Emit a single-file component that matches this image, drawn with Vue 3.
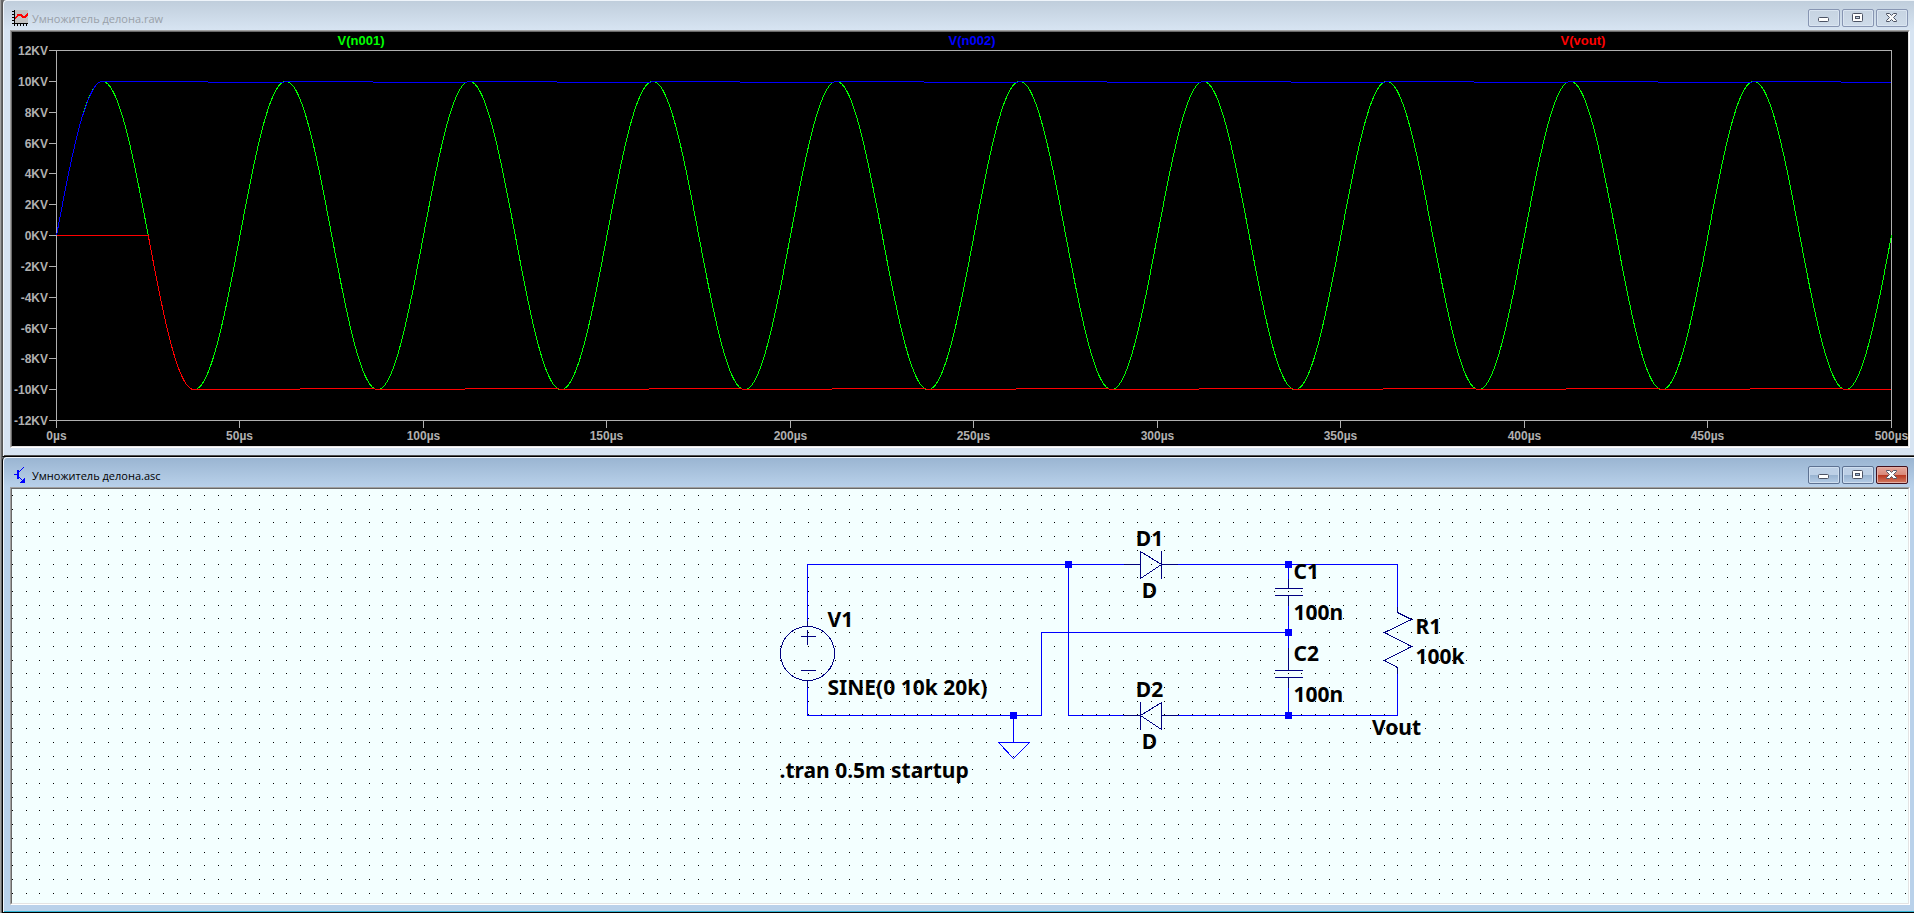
<script setup>
import { ref, computed, onMounted, onBeforeUnmount } from 'vue'

const plotPane = ref(null)
const sheetPane = ref(null)
const plotSize = ref({ w: 1896, h: 414 })
const sheetSize = ref({ w: 1896, h: 414 })
let observer

function measure() {
  if (plotPane.value) plotSize.value = { w: plotPane.value.clientWidth, h: plotPane.value.clientHeight }
  if (sheetPane.value) sheetSize.value = { w: sheetPane.value.clientWidth, h: sheetPane.value.clientHeight }
}

onMounted(() => {
  measure()
  observer = new ResizeObserver(measure)
  observer.observe(plotPane.value)
  observer.observe(sheetPane.value)
})
onBeforeUnmount(() => observer && observer.disconnect())

// Waveform plot area inside the pane
const area = computed(() => ({
  left: 44,
  top: 18,
  right: plotSize.value.w - 17,
  bottom: plotSize.value.h - 26
}))

const xAt = (us) => area.value.left + ((area.value.right - area.value.left) * us) / 500
const yAt = (kv) => area.value.top + ((area.value.bottom - area.value.top) * (12 - kv)) / 24
const px = (v) => Math.floor(v + 0.001) + 0.5
const py = (v) => Math.round(v) + 0.5

const yTicks = computed(() =>
  Array.from({ length: 13 }, (_, i) => {
    const kv = 12 - i * 2
    return { label: `${kv}KV`, y: py(yAt(kv)) }
  })
)
const xTicks = computed(() =>
  Array.from({ length: 11 }, (_, i) => ({ label: `${i * 50}µs`, x: px(xAt(i * 50)) }))
)
const traces = computed(() => {
  const span = area.value.right - area.value.left
  return [
    { name: 'V(n001)', cls: 'green', x: Math.round(area.value.left + span / 6) - 1 },
    { name: 'V(n002)', cls: 'blue', x: Math.round(area.value.left + span / 2) - 2 },
    { name: 'V(vout)', cls: 'red', x: Math.round(area.value.left + (span * 5) / 6) - 2 }
  ]
})

const sine = (us) => 10 * Math.sin((2 * Math.PI * us) / 50)
const pt = (us, kv) => `${(xAt(us) + 0.5).toFixed(2)} ${(yAt(kv) + 0.5).toFixed(2)}`

function sampled(from, to, step, fn) {
  const out = []
  for (let t = from; t <= to + 1e-6; t += step) out.push(pt(t, fn(t)))
  return out.join('L')
}

const greenPath = computed(() => 'M' + sampled(0, 500, 0.5, sine))

// A rectified level sags by one pixel between recharge peaks
function level(firstPeak, kv, drift) {
  const y = py(yAt(kv))
  let d = ''
  for (let peak = firstPeak; peak < 500; peak += 50) {
    const sag = Math.min(peak + (peak === firstPeak ? 29 : 24), 500)
    const next = Math.min(peak + 49.5, 500)
    const a = Math.round(xAt(peak - 0.5))
    d += `M${a} ${y}H${Math.round(xAt(sag))}`
    if (sag < 500) d += `M${Math.round(xAt(sag))} ${y + drift}H${Math.round(xAt(next))}`
  }
  return d
}

const bluePath = computed(
  () => 'M' + sampled(0, 12.5, 0.5, (t) => sine(t > 7 && t < 11 ? t - 0.08 : t)) + level(12.5, 10, 1)
)
const redPath = computed(
  () => `M${pt(0, 0)}L${pt(25, 0)}L` + sampled(25.5, 37.5, 0.5, sine) + level(37.5, -10, -1)
)

// Schematic grid: one dot per grid step
const pitch = 13.717
const dots = computed(() => {
  let d = ''
  for (let j = 0; 6 + j * pitch < sheetSize.value.h; j++) {
    const y = Math.round(6 + j * pitch) + 0.5
    for (let i = 0; i * pitch < sheetSize.value.w; i++) d += `M${Math.round(i * pitch)} ${y}h1`
  }
  return d
})

const junctions = [
  [1068, 564], [1288, 564], [1288, 632], [1288, 715], [1013, 715]
]
const labels = [
  { t: 'V1', x: 827, y: 626 },
  { t: 'SINE(0 10k 20k)', x: 827, y: 694 },
  { t: '.tran 0.5m startup', x: 779, y: 777 },
  { t: 'D1', x: 1149, y: 545, mid: true },
  { t: 'D', x: 1149, y: 597, mid: true },
  { t: 'D2', x: 1149, y: 696, mid: true },
  { t: 'D', x: 1149, y: 748, mid: true },
  { t: 'C1', x: 1293, y: 578 },
  { t: '100n', x: 1293, y: 619 },
  { t: 'C2', x: 1293, y: 660 },
  { t: '100n', x: 1293, y: 701 },
  { t: 'R1', x: 1415, y: 633 },
  { t: '100k', x: 1415, y: 663 },
  { t: 'Vout', x: 1396, y: 734, mid: true }
]
</script>

<template>
  <main class="desk">
    <section class="win inactive">
      <header class="bar">
        <svg class="icon" viewBox="0 0 16 16" width="16" height="16" shape-rendering="crispEdges" aria-hidden="true">
          <rect x="2" y="0" width="14" height="13" fill="#c0c0c0" />
          <path d="M2.5 0V16M0 13.5H16M0 1.5H2M0 4.5H2M0 7.5H2M0 10.5H2M5.5 14V16M8.5 14V16M11.5 14V16M14.5 14V16" stroke="#000" fill="none" />
          <path d="M3 8.5L6 5H9L11 7H13L16 4" stroke="#f00" stroke-width="1.5" fill="none" />
        </svg>
        <h1 class="name">Умножитель делона.raw</h1>
        <div class="buttons">
          <button type="button" aria-label="Minimize">
            <svg viewBox="1 1 12 10" width="12" height="10"><rect x="1.5" y="5.5" width="10" height="4" rx="1" fill="#fff" stroke="#4c5364" /></svg>
          </button>
          <button type="button" aria-label="Restore">
            <svg viewBox="1 1 12 10" width="12" height="10"><rect x="1.5" y="1.5" width="10" height="8" rx="1" fill="#fff" stroke="#4c5364" /><rect x="4.5" y="4.5" width="4" height="2" fill="#c3d0de" stroke="#4c5364" /></svg>
          </button>
          <button type="button" aria-label="Close">
            <svg viewBox="1 1 12 10" width="12" height="10"><path d="M1.5 1.5H4.5L6.5 3.5L8.5 1.5H11.5V2.5L8.5 5.5L11.5 8.5V9.5H8.5L6.5 7.5L4.5 9.5H1.5V8.5L4.5 5.5L1.5 2.5Z" fill="#f8f8f8" stroke="#4c5364" /></svg>
          </button>
        </div>
      </header>
      <div class="sunken plot">
        <div ref="plotPane" class="pane">
          <svg class="fill" :width="plotSize.w" :height="plotSize.h" role="img" aria-label="Waveforms">
            <g class="axis">
              <path :d="`M${area.left} ${area.top + 0.5}H${area.right + 1}M${area.left} ${area.bottom + 0.5}H${area.right + 1}M${area.left + 0.5} ${area.top}V${area.bottom + 8}M${area.right + 0.5} ${area.top}V${area.bottom + 8}`" />
              <path v-for="k in yTicks" :key="k.label" :d="`M${area.left - 7} ${k.y}h7`" />
              <path v-for="k in xTicks" :key="k.label" :d="`M${k.x} ${area.bottom}v8`" />
            </g>
            <g class="wave">
              <path class="green" :d="greenPath" />
              <path class="blue" :d="bluePath" />
              <path class="red" :d="redPath" />
            </g>
            <g class="scale">
              <text v-for="k in yTicks" :key="k.label" class="end" x="36" :y="k.y + 4.5">{{ k.label }}</text>
              <text v-for="k in xTicks" :key="k.label" class="mid" :x="k.x" :y="area.bottom + 20">{{ k.label }}</text>
            </g>
            <g class="legend">
              <text v-for="t in traces" :key="t.name" class="mid" :class="t.cls" :x="t.x" y="13">{{ t.name }}</text>
            </g>
          </svg>
        </div>
      </div>
    </section>

    <section class="win active">
      <header class="bar">
        <svg class="icon" viewBox="0 0 16 16" width="16" height="16" shape-rendering="crispEdges" aria-hidden="true">
          <path d="M2 7.5H6M11.5 .5L6 6M6 9L12 15" stroke="#00f" fill="none" />
          <path d="M6 3V12" stroke="#00f" stroke-width="2" />
          <path d="M12.500 11V15.5H8Z" fill="#00f" />
        </svg>
        <h2 class="name">Умножитель делона.asc</h2>
        <div class="buttons">
          <button type="button" aria-label="Minimize">
            <svg viewBox="1 1 12 10" width="12" height="10"><rect x="1.5" y="5.5" width="10" height="4" rx="1" fill="#fff" stroke="#4c5364" /></svg>
          </button>
          <button type="button" aria-label="Restore">
            <svg viewBox="1 1 12 10" width="12" height="10"><rect x="1.5" y="1.5" width="10" height="8" rx="1" fill="#fff" stroke="#4c5364" /><rect x="4.5" y="4.5" width="4" height="2" fill="#9ab8d8" stroke="#4c5364" /></svg>
          </button>
          <button type="button" class="close" aria-label="Close">
            <svg viewBox="1 1 12 10" width="12" height="10"><path d="M1.5 1.5H4.5L6.5 3.5L8.5 1.5H11.5V2.5L8.5 5.5L11.5 8.5V9.5H8.5L6.5 7.5L4.5 9.5H1.5V8.5L4.5 5.5L1.5 2.5Z" fill="#fff" stroke="#535666" /></svg>
          </button>
        </div>
      </header>
      <div class="sunken sheet">
        <div ref="sheetPane" class="pane">
          <svg class="fill" :width="sheetSize.w" :height="sheetSize.h" role="img" aria-label="Schematic">
            <path class="dots" :d="dots" />
            <g transform="translate(-11.5 -488.5)">
              <g class="wire">
                <path d="M807 626V564H1123M1177 564H1397V606M807 680V715H1041V632H1288M1068 564V715H1123M1177 715H1397V673" />
                <path d="M1288 564V578M1288 605V647M1288 687V715M1013 715V742M998 742H1029L1013 758Z" />
              </g>
              <g class="part">
                <circle cx="807" cy="653" r="27" />
                <path d="M807 620V626M807 680V686M800 636H815M807 629V644M800 670H815" />
                <path d="M1123 564H1140M1161 564H1177M1140 550V578M1161 550V578M1140 551L1161 564L1140 578" />
                <path d="M1123 715H1140M1161 715H1177M1140 701V729M1161 701V729M1161 702L1140 715L1161 729" />
                <path d="M1288 578V588M1288 595V605M1274 588H1302M1274 595H1302" />
                <path d="M1288 647V670M1288 677V687M1274 670H1302M1274 677H1302" />
                <path d="M1397 606V612L1411 619L1384 632L1411 646L1384 660L1397 667V673" />
              </g>
              <rect v-for="(j, i) in junctions" :key="i" class="node" :x="j[0] - 3.5" :y="j[1] - 3.5" width="7" height="7" />
              <text v-for="(l, i) in labels" :key="i" class="label" :class="{ mid: l.mid }" :x="l.x" :y="l.y">{{ l.t }}</text>
            </g>
          </svg>
        </div>
      </div>
    </section>
  </main>
</template>

<style>
body {
  background: #6b6b6b;
}
</style>

<style scoped>
.desk {
  min-height: 100vh;
  display: flex;
  flex-direction: column;
  box-sizing: border-box;
  border-left: 1px solid #a0a0a0;
  box-shadow: inset 1px 0 #696969;
  padding-left: 1px;
}
.win {
  flex: 1 1 auto;
  display: flex;
  flex-direction: column;
  padding: 0 4px 0 7px;
}
.inactive {
  border-left: 1px solid #555;
  border-bottom: 1px solid #000;
  padding-bottom: 8px;
  border-top-left-radius: 4px;
  background: linear-gradient(#bfcddb, #d7e4f2 30px);
  box-shadow: inset 1px 1px #eef4fa, inset 0 -1px #505050;
}
.active {
  border-left: 1px solid #000;
  border-bottom: 1px solid #000;
  padding-bottom: 7px;
  border-top-left-radius: 4px;
  background: linear-gradient(#99b4d1, #b9d1ea 30px);
  box-shadow: inset 1px 1px #f0f6fc, inset 0 -1px #35b5d5;
}
.bar {
  display: flex;
  align-items: center;
  height: 30px;
  padding-left: 2px;
  box-sizing: border-box;
}
.icon {
  flex: none;
  margin-top: 6px;
}
.name {
  flex: 1;
  margin: 7px 0 0 4px;
  font: 400 11px/16px "Open Sans", "Noto Sans", sans-serif;
  color: #000;
  white-space: nowrap;
}
.inactive .name {
  color: #99a0a8;
}
.buttons {
  display: flex;
  gap: 2px;
  margin: 6px 2px 0 0;
}
button {
  display: flex;
  align-items: center;
  justify-content: center;
  width: 32px;
  height: 18px;
  padding: 0;
  border: 1px solid #8795b2;
  border-radius: 2px;
  background: linear-gradient(#c6d3e1, #cedbe9);
  box-shadow: inset 0 0 0 1px #dae5f1;
}
.active button {
  border-color: #5d7292;
  background: linear-gradient(#bdd0e6 50%, #98b3d0 50%, #b4cce6);
  box-shadow: inset 0 0 0 1px #cfdff0;
}
.active button.close {
  border-color: #43101c;
  background: linear-gradient(#e5a79c, #d98878 50%, #b8361f 50%, #d27b62);
  box-shadow: inset 0 0 0 1px #e6b0a5;
}
.sunken {
  flex: 1 1 auto;
  display: flex;
  border: 1px solid;
  border-color: #a0a0a0 #fff #fff #a0a0a0;
}
.pane {
  flex: 1 1 0;
  min-width: 0;
  min-height: 414px;
  overflow: hidden;
  position: relative;
  border: 1px solid;
  border-color: #696969 #e3e3e3 #e3e3e3 #696969;
}
.plot .pane {
  background: #000;
}
.sheet .pane {
  background: #f3ffff;
}
.fill {
  display: block;
  position: absolute;
  inset: 0;
}
.axis path {
  stroke: #b0b0b0;
  fill: none;
  shape-rendering: crispEdges;
}
.wave path {
  fill: none;
  shape-rendering: crispEdges;
}
.wave .green { stroke: #0f0; }
.wave .blue { stroke: #00f; }
.wave .red { stroke: #f00; }
.scale text {
  font: 700 12px "Liberation Sans", Arial, sans-serif;
  fill: #b0b0b0;
}
.legend text {
  font: 700 13px "Liberation Sans", Arial, sans-serif;
}
.legend .green { fill: #0f0; }
.legend .blue { fill: #00f; }
.legend .red { fill: #f00; }
.end { text-anchor: end; }
.mid { text-anchor: middle; }
.dots {
  stroke: #000;
  shape-rendering: crispEdges;
}
.wire path {
  stroke: #00f;
  fill: none;
  shape-rendering: crispEdges;
  stroke-linecap: square;
}
.part path,
.part circle {
  stroke: #000080;
  fill: none;
  shape-rendering: crispEdges;
}
.node {
  fill: #00f;
}
.label {
  font: 700 21px "Noto Sans", "Open Sans", sans-serif;
  fill: #000;
}
</style>
